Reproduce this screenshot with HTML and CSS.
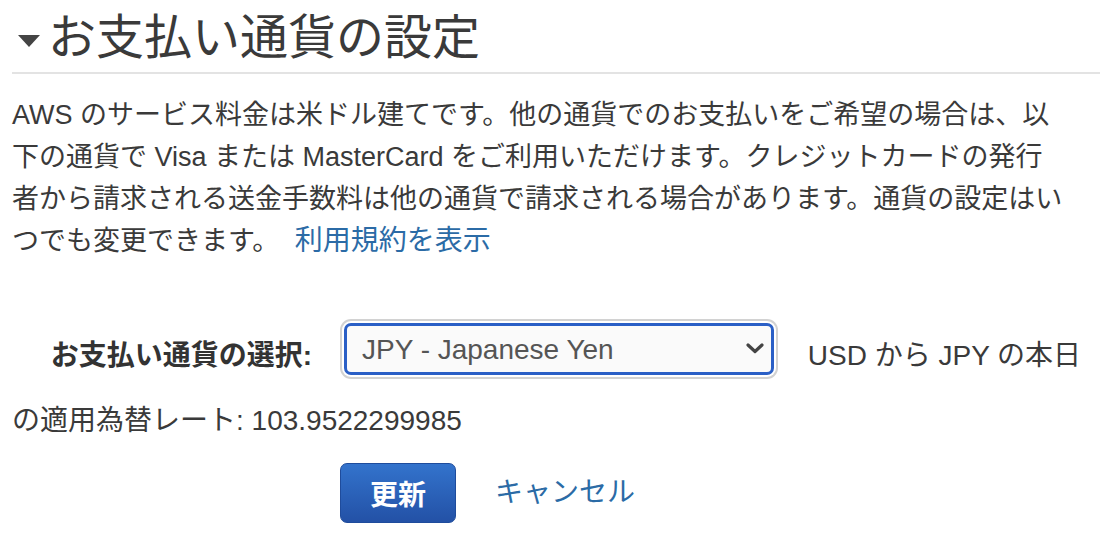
FILE: index.html
```html
<!DOCTYPE html>
<html>
<head>
<meta charset="utf-8">
<meta name="viewport" content="width=device-width, initial-scale=1.0">
<link rel="stylesheet" href="styles.css">
</head>
<body>

<div class="page">
  <h2 class="section-title"><span class="caret"></span>お支払い通貨の設定</h2>

  <p class="intro">AWS のサービス料金は米ドル建てです。他の通貨でのお支払いをご希望の場合は、以下の通貨で Visa または MasterCard をご利用いただけます。クレジットカードの発行者から請求される送金手数料は他の通貨で請求される場合があります。通貨の設定はいつでも変更できます。 <a href="#" class="link terms">利用規約を表示</a></p>

  <p class="currency-row"><label for="currency" class="currency-label">お支払い通貨の選択:</label><span class="select-wrap"><select id="currency" class="currency-select">
        <option value="JPY">JPY - Japanese Yen</option>
        <option value="USD">USD - US Dollar</option>
        <option value="EUR">EUR - Euro</option>
      </select><svg class="chevron" width="18" height="11" viewBox="0 0 18 11"><polyline points="2,2 9,8.5 16,2" fill="none" stroke="#444" stroke-width="3.2" stroke-linecap="round" stroke-linejoin="round"/></svg></span> USD から JPY の本日の適用為替レート: 103.9522299985</p>

  <div class="actions">
    <button class="btn-primary">更新</button>
    <a href="#" class="link">キャンセル</a>
  </div>
</div>

</body>
</html>
```

FILE: styles.css
```css
* {box-sizing: border-box;}
body {margin: 0; background: #fff; color: #333; font-family: "Liberation Sans", "Noto Sans CJK JP", sans-serif;}
.page {width: 1112px; padding: 0 12px;}

.section-title {margin: 10px 0 0; padding: 0 0 6px 6px; font-size: 48px; font-weight: normal; line-height: 56px; color: #3a3a3a; border-bottom: 2px solid #e3e3e3;}
.caret {display: inline-block; width: 0; height: 0; margin-right: 8px; vertical-align: middle; border-left: 11px solid transparent; border-right: 11px solid transparent; border-top: 12px solid #444;}

.intro {margin: 20px 0 0; max-width: 1056px; font-size: 27px; line-height: 42px; color: #3a3a3a;}
.link {color: #2b6ba6; text-decoration: none;}
.terms {margin-left: 8px; font-size: 28px;}

.currency-row {margin: 54px 0 0; max-width: 1075px; font-size: 28px; line-height: 42px; color: #3a3a3a;}
.currency-label {display: inline-block; width: 300px; text-align: right; font-weight: bold; color: #333;}
.select-wrap {position: relative; display: inline-block; vertical-align: middle; margin: 7px 26px 25px 32px;}
.currency-select {display: block; width: 430px; height: 52px; padding: 0 40px 0 15px; border: 3px solid #2a5fc6; border-radius: 7px; box-shadow: 0 0 0 2px #fff, 0 0 0 4px #d2d2d2; background: #fafafa; color: #555; font-family: "Liberation Sans", sans-serif; font-size: 28px; -webkit-appearance: none; appearance: none; outline: 0;}
.chevron {position: absolute; right: 10px; top: 20px;}

.actions {display: flex; align-items: center; gap: 39px; margin-top: 21px; padding-left: 328px;}
.btn-primary {width: 116px; height: 60px; border: 1px solid #1f4c9c; border-radius: 7px; background: linear-gradient(#3373cc, #2351a6); color: #fff; font-family: "Liberation Sans", "Noto Sans CJK JP", sans-serif; font-size: 28px; font-weight: bold; cursor: pointer;}
.actions .link {font-size: 28px; line-height: 42px;}
```
